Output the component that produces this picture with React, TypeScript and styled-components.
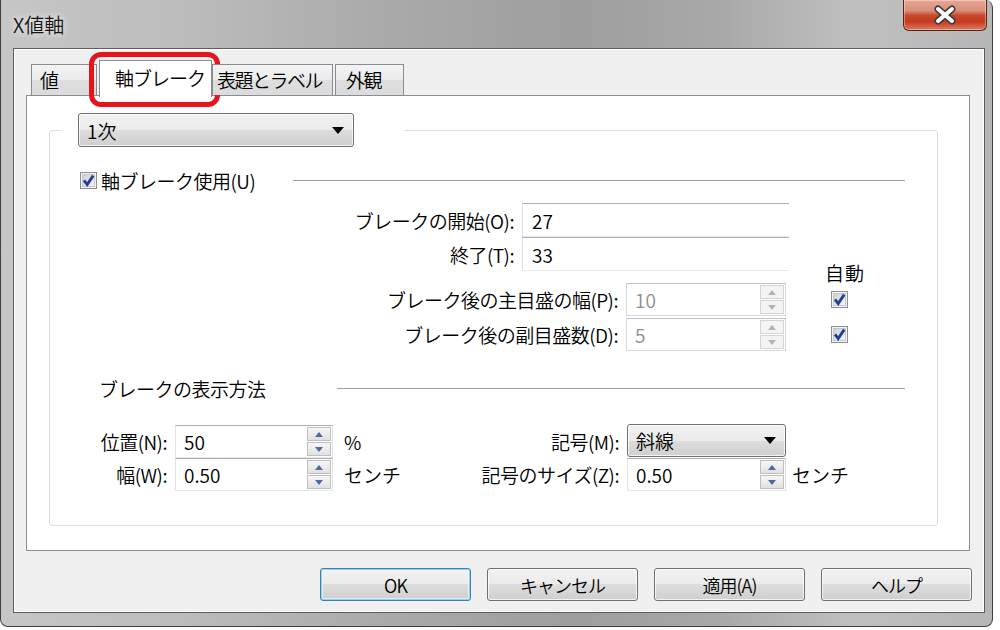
import React from "react";
import styled, { createGlobalStyle } from "styled-components";

const GlobalStyle = createGlobalStyle`
  html, body {
    margin: 0;
    padding: 0;
    background: #ffffff;
  }
  body {
    font-family: "Noto Sans CJK JP", "Noto Sans", sans-serif;
    font-size: 19px;
    font-weight: 350;
    color: #000;
  }
`;

const Window = styled.div`
  width: 993px;
  height: 627px;
  box-sizing: border-box;
  border: 1px solid #3f3f3f;
  border-top: none;
  border-radius: 0 8px 8px 8px;
  padding: 0 7px 13px 12px;
  display: flex;
  flex-direction: column;
  background: linear-gradient(
    90deg,
    #c6c6c6 0%,
    #bcbcbc 18%,
    #a9a9a9 40%,
    #9e9e9e 58%,
    #a8a8a8 72%,
    #c0c0c0 86%,
    #b6b6b6 100%
  );
`;

const TitleBar = styled.div`
  height: 48px;
  display: flex;
  align-items: center;
  justify-content: space-between;
`;

const Title = styled.div`
  font-size: 20px;
  color: #161616;
  text-shadow: 0 0 6px rgba(255, 255, 255, 0.7), 0 0 10px rgba(255, 255, 255, 0.5);
`;

const CloseButton = styled.div`
  align-self: flex-start;
  width: 84px;
  height: 31px;
  margin-right: -2px;
  box-sizing: border-box;
  border: 1px solid #5a2419;
  border-top: none;
  border-radius: 0 0 6px 6px;
  background: linear-gradient(
    #e7a796 0%,
    #db8e7b 35%,
    #c8472c 52%,
    #c53a1e 72%,
    #dc7c61 100%
  );
  box-shadow: inset 0 0 0 1px rgba(255, 255, 255, 0.35);
  display: flex;
  align-items: center;
  justify-content: center;
`;

const Client = styled.div`
  flex: 1;
  display: flex;
  flex-direction: column;
  background: #f0f0f0;
  border: 1px solid #5d5d5d;
  box-shadow: inset 0 0 0 1px #ffffff;
  padding: 11px 14px 0 12px;
`;

const TabStrip = styled.div`
  display: flex;
  align-items: flex-end;
  height: 35px;
  position: relative;
  z-index: 1;
`;

const Tab = styled.div<{ $w: number; $ml?: number; $pl: number; $active?: boolean }>`
  position: relative;
  width: ${(p) => p.$w}px;
  margin-left: ${(p) => p.$ml ?? 0}px;
  height: ${(p) => (p.$active ? 37 : 31)}px;
  margin-bottom: ${(p) => (p.$active ? -2 : 0)}px;
  box-sizing: border-box;
  border: 1px solid #898c95;
  border-bottom: none;
  background: ${(p) =>
    p.$active ? "#ffffff" : "linear-gradient(#f3f3f3 0%, #ebebeb 50%, #dedede 50%, #dbdbdb 100%)"};
  display: flex;
  align-items: center;
  padding: ${(p) => (p.$active ? "0 0 3px" : "0 0 1px")} ${(p) => p.$pl}px;
  font-size: 19px;
  letter-spacing: ${(p) => (p.$active ? -1 : -1.5)}px;
  white-space: nowrap;
`;

const Highlight = styled.div`
  position: absolute;
  left: -11px;
  top: -9px;
  width: 131px;
  height: 55px;
  box-sizing: border-box;
  border: 5px solid #e8141b;
  border-radius: 12px;
  pointer-events: none;
`;

const Panel = styled.div`
  height: 456px;
  box-sizing: border-box;
  background: #ffffff;
  border: 1px solid #898c95;
  padding: 17px 31px 0 22px;
`;

const Group = styled.fieldset`
  margin: 0;
  padding: 0;
  min-width: 0;
  height: 413px;
  box-sizing: border-box;
  border: 1px solid #d5dfe5;
  border-radius: 3px;
`;

const GroupLegend = styled.legend`
  margin-left: 11px;
  padding: 0 50px 0 17px;
`;

const Combo = styled.div<{ $w: number; $h: number; $lift?: number }>`
  width: ${(p) => p.$w}px;
  height: ${(p) => p.$h}px;
  margin-top: ${(p) => -(p.$lift ?? 0)}px;
  box-sizing: border-box;
  border: 1px solid #707070;
  border-radius: 3px;
  background: linear-gradient(#f2f2f2 0%, #ebebeb 50%, #dddddd 50%, #cfcfcf 100%);
  box-shadow: inset 0 0 0 1px rgba(255, 255, 255, 0.75);
  display: flex;
  align-items: center;
  justify-content: space-between;
  padding: 0 9px 0 8px;
  font-size: 19px;
`;

const Heading = styled.div<{ $ml: number; $mt: number }>`
  display: flex;
  align-items: center;
  height: 26px;
  margin: ${(p) => p.$mt}px 32px 0 ${(p) => p.$ml}px;
`;

const HeadingText = styled.div<{ $w: number; $pl?: number }>`
  width: ${(p) => p.$w}px;
  padding-left: ${(p) => p.$pl ?? 0}px;
  flex: none;
  white-space: nowrap;
  letter-spacing: -0.5px;
`;

const Rule = styled.div`
  flex: 1;
  height: 1px;
  background: #a0a0a0;
`;

const Row = styled.div<{ $h: number; $mt?: number }>`
  display: flex;
  align-items: center;
  height: ${(p) => p.$h}px;
  margin-top: ${(p) => p.$mt ?? 0}px;
`;

const Label = styled.div<{ $w: number }>`
  width: ${(p) => p.$w}px;
  flex: none;
  box-sizing: border-box;
  padding-right: 8px;
  text-align: right;
  white-space: nowrap;
  letter-spacing: -0.5px;
`;

const TextBox = styled.div<{ $w: number }>`
  width: ${(p) => p.$w}px;
  height: 100%;
  box-sizing: border-box;
  border-style: solid;
  border-width: 1px 0 1px 1px;
  border-color: #abadb3 transparent #e3e9ef #dbdfe6;
  padding-left: 9px;
  display: flex;
  align-items: center;
`;

const AutoLabel = styled.div`
  height: 20px;
  margin-top: -8px;
  padding-left: 775px;
  line-height: 20px;
  letter-spacing: 1px;
`;

const SpinFrame = styled.div<{ $w: number; $disabled?: boolean }>`
  width: ${(p) => p.$w}px;
  height: 100%;
  box-sizing: border-box;
  display: flex;
  border: 1px solid;
  border-color: ${(p) =>
    p.$disabled ? "#bfc3c8 #d5d8dc #d5d8dc #d5d8dc" : "#abadb3 #dbdfe6 #e3e9ef #e2e3ea"};
  background: #ffffff;
`;

const SpinValue = styled.div<{ $disabled?: boolean }>`
  flex: 1;
  display: flex;
  align-items: center;
  padding-left: 8px;
  color: ${(p) => (p.$disabled ? "#8d8d8d" : "#000")};
`;

const SpinButtons = styled.div`
  width: 26px;
  display: flex;
  flex-direction: column;
  padding: 1px;
  box-sizing: border-box;
  gap: 1px;
`;

const SpinButton = styled.div<{ $disabled?: boolean }>`
  flex: 1;
  display: flex;
  align-items: center;
  justify-content: center;
  border: 1px solid ${(p) => (p.$disabled ? "#d4d4d4" : "#bfbfbf")};
  background: ${(p) =>
    p.$disabled ? "#f4f4f4" : "linear-gradient(#f6f6f6 0%, #ececec 50%, #e0e0e0 100%)"};
`;

const Unit = styled.div<{ $pl: number }>`
  padding-left: ${(p) => p.$pl}px;
  white-space: nowrap;
`;

const OptionGrid = styled.div`
  display: grid;
  grid-template-columns: 125px 158px 144px 150px 159px auto;
  grid-auto-rows: 33px;
  align-items: center;
  margin-top: 24px;
`;

const CheckWrap = styled.div<{ $ml: number }>`
  margin-left: ${(p) => p.$ml}px;
  width: 17px;
  height: 17px;
  flex: none;
  display: flex;
`;

const ButtonBar = styled.div`
  display: flex;
  justify-content: flex-end;
  gap: 16px;
  margin: 17px -2px 0 0;
`;

const Button = styled.div<{ $default?: boolean }>`
  width: 151px;
  height: 33px;
  box-sizing: border-box;
  border: 1px solid ${(p) => (p.$default ? "#3c7fb1" : "#707070")};
  border-radius: 3px;
  background: linear-gradient(#f2f2f2 0%, #ebebeb 50%, #dddddd 50%, #cfcfcf 100%);
  box-shadow: ${(p) =>
    p.$default
      ? "inset 0 0 0 1px #8fd3f2, inset 0 0 0 2px rgba(255,255,255,0.5)"
      : "inset 0 0 0 1px rgba(255,255,255,0.75)"};
  display: flex;
  align-items: center;
  justify-content: center;
  font-size: 18px;
  letter-spacing: -1px;
`;

const Arrow = ({ up, disabled }: { up?: boolean; disabled?: boolean }) => (
  <svg width="8" height="5" viewBox="0 0 8 5">
    <path
      d={up ? "M0 5 L4 0 L8 5 Z" : "M0 0 L8 0 L4 5 Z"}
      fill={disabled ? "#b4b4b4" : "#4d68a6"}
    />
  </svg>
);

const ComboArrow = () => (
  <svg width="12" height="7" viewBox="0 0 12 7">
    <path d="M0 0 L12 0 L6 7 Z" fill="#000" />
  </svg>
);

const CheckBox = () => (
  <svg width="17" height="17" viewBox="0 0 17 17">
    <defs>
      <linearGradient id="cbg" x1="0" y1="0" x2="1" y2="1">
        <stop offset="0" stopColor="#cbcfd6" />
        <stop offset="1" stopColor="#f7f7f7" />
      </linearGradient>
    </defs>
    <rect x="0.5" y="0.5" width="16" height="16" fill="#f4f4f4" stroke="#8e8f8f" />
    <rect x="2.5" y="2.5" width="12" height="12" fill="url(#cbg)" stroke="#c3c8d0" />
    <path d="M4 8.4 L7.2 12.6 L13.2 3.6" fill="none" stroke="#213f8e" strokeWidth="2.8" />
  </svg>
);

const CloseIcon = () => (
  <svg width="26" height="20" viewBox="0 0 26 20">
    <path d="M6 4 L20 16 M20 4 L6 16" stroke="#3b3b3b" strokeWidth="7" strokeLinecap="round" />
    <path d="M6 4 L20 16 M20 4 L6 16" stroke="#ffffff" strokeWidth="4" strokeLinecap="round" />
  </svg>
);

const Spin = ({ w, value, disabled }: { w: number; value: string; disabled?: boolean }) => (
  <SpinFrame $w={w} $disabled={disabled}>
    <SpinValue $disabled={disabled}>{value}</SpinValue>
    <SpinButtons>
      <SpinButton $disabled={disabled}>
        <Arrow up disabled={disabled} />
      </SpinButton>
      <SpinButton $disabled={disabled}>
        <Arrow disabled={disabled} />
      </SpinButton>
    </SpinButtons>
  </SpinFrame>
);

const App: React.FC = () => {
  return (
    <>
      <GlobalStyle />
      <Window>
        <TitleBar>
          <Title>X値軸</Title>
          <CloseButton>
            <CloseIcon />
          </CloseButton>
        </TitleBar>
        <Client>
          <TabStrip>
            <Tab $w={66} $ml={5} $pl={8}>値</Tab>
            <Tab $w={113} $ml={2} $pl={15} $active>
              軸ブレーク
              <Highlight />
            </Tab>
            <Tab $w={121} $pl={4}>表題とラベル</Tab>
            <Tab $w={69} $ml={2} $pl={10}>外観</Tab>
          </TabStrip>
          <Panel>
            <Group>
              <GroupLegend>
                <Combo $w={276} $h={34}>
                  <span>1次</span>
                  <ComboArrow />
                </Combo>
              </GroupLegend>

              <Heading $ml={30} $mt={20}>
                <CheckWrap $ml={0}>
                  <CheckBox />
                </CheckWrap>
                <HeadingText $w={192} $pl={4}>
                  軸ブレーク使用(U)
                </HeadingText>
                <Rule />
              </Heading>

              <Row $h={34} $mt={10}>
                <Label $w={472}>ブレークの開始(O):</Label>
                <TextBox $w={267}>27</TextBox>
              </Row>
              <Row $h={34}>
                <Label $w={472}>終了(T):</Label>
                <TextBox $w={267}>33</TextBox>
              </Row>
              <AutoLabel>自動</AutoLabel>
              <Row $h={33}>
                <Label $w={576}>ブレーク後の主目盛の幅(P):</Label>
                <Spin w={160} value="10" disabled />
                <CheckWrap $ml={45}>
                  <CheckBox />
                </CheckWrap>
              </Row>
              <Row $h={33} $mt={2}>
                <Label $w={576}>ブレーク後の副目盛数(D):</Label>
                <Spin w={160} value="5" disabled />
                <CheckWrap $ml={45}>
                  <CheckBox />
                </CheckWrap>
              </Row>

              <Heading $ml={49} $mt={24}>
                <HeadingText $w={238}>ブレークの表示方法</HeadingText>
                <Rule />
              </Heading>

              <OptionGrid>
                <Label $w={125}>位置(N):</Label>
                <Spin w={158} value="50" />
                <Unit $pl={11}>%</Unit>
                <Label $w={150}>記号(M):</Label>
                <Combo $w={159} $h={33} $lift={3}>
                  <span>斜線</span>
                  <ComboArrow />
                </Combo>
                <span />

                <Label $w={125}>幅(W):</Label>
                <Spin w={158} value="0.50" />
                <Unit $pl={11}>センチ</Unit>
                <Label $w={150}>記号のサイズ(Z):</Label>
                <Spin w={159} value="0.50" />
                <Unit $pl={6}>センチ</Unit>
              </OptionGrid>
            </Group>
          </Panel>
          <ButtonBar>
            <Button $default>OK</Button>
            <Button>キャンセル</Button>
            <Button>適用(A)</Button>
            <Button>ヘルプ</Button>
          </ButtonBar>
        </Client>
      </Window>
    </>
  );
};

export default App;
